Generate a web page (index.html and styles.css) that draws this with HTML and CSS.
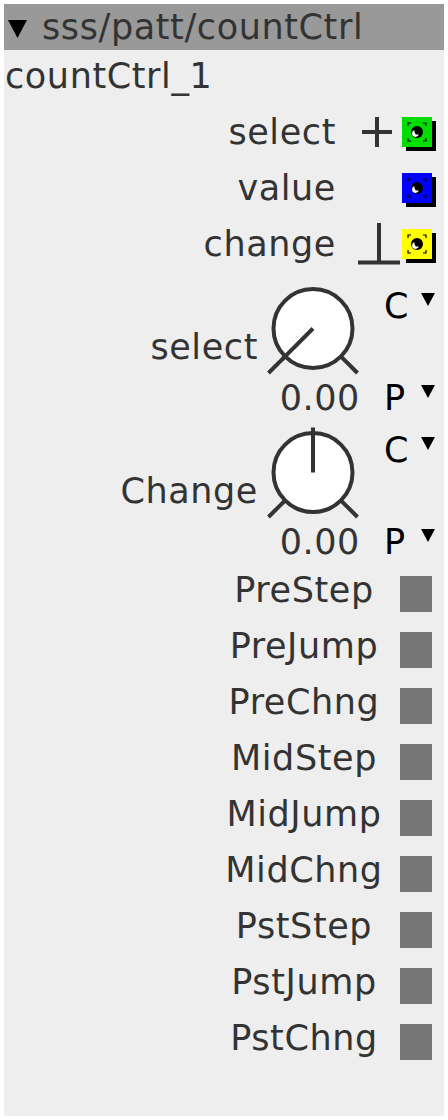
FILE: index.html
```html
<!DOCTYPE html>
<html lang="en">
<head>
<meta charset="UTF-8">
<title>countCtrl</title>
<link rel="stylesheet" href="styles.css">
</head>
<body>
<div class="panel">
    <div class="title">
        <svg class="title-arrow" width="19" height="18" viewBox="0 0 19 18"><polygon points="0,0 19,0 9.5,18" fill="#000"/></svg>
        <span>sss/patt/countCtrl</span>
    </div>
    <div class="name">countCtrl_1</div>

    <div class="ports">
        <div class="port">
            <span class="plabel">select</span>
            <svg class="pmark" width="44" height="44" viewBox="0 0 44 44">
                <line x1="4" y1="22" x2="34" y2="22" stroke="#333" stroke-width="4"/>
                <line x1="19" y1="7" x2="19" y2="37" stroke="#333" stroke-width="4"/>
            </svg>
            <div class="jack green">
                <svg width="30" height="30" viewBox="0 0 30 30">
                    <path d="M6 9V6H9M21 6H24V9M6 21V24H9M24 21V24H21" fill="none" stroke="#000" stroke-width="1.2"/>
                    <circle cx="15" cy="15" r="6" fill="#000"/>
                    <circle cx="13.4" cy="16.6" r="3.3" fill="#fff"/>
                    <circle cx="15.6" cy="14.4" r="3.1" fill="#000"/>
                </svg>
            </div>
        </div>
        <div class="port">
            <span class="plabel">value</span>
            <svg class="pmark" width="44" height="44" viewBox="0 0 44 44"></svg>
            <div class="jack blue">
                <svg width="30" height="30" viewBox="0 0 30 30">
                    <path d="M6 9V6H9M21 6H24V9M6 21V24H9M24 21V24H21" fill="none" stroke="#000" stroke-width="1.2"/>
                    <circle cx="15" cy="15" r="6" fill="#000"/>
                    <circle cx="13.4" cy="16.6" r="3.3" fill="#fff"/>
                    <circle cx="15.6" cy="14.4" r="3.1" fill="#000"/>
                </svg>
            </div>
        </div>
        <div class="port">
            <span class="plabel">change</span>
            <svg class="pmark" width="44" height="44" viewBox="0 0 44 44">
                <line x1="21" y1="1" x2="21" y2="40" stroke="#333" stroke-width="4"/>
                <line x1="0" y1="40.5" x2="42" y2="40.5" stroke="#333" stroke-width="4"/>
            </svg>
            <div class="jack yellow">
                <svg width="30" height="30" viewBox="0 0 30 30">
                    <path d="M6 9V6H9M21 6H24V9M6 21V24H9M24 21V24H21" fill="none" stroke="#000" stroke-width="1.2"/>
                    <circle cx="15" cy="15" r="6" fill="#000"/>
                    <circle cx="13.4" cy="16.6" r="3.3" fill="#fff"/>
                    <circle cx="15.6" cy="14.4" r="3.1" fill="#000"/>
                </svg>
            </div>
        </div>
    </div>

    <div class="knob">
        <div class="knob-top">
            <span class="klabel">select</span>
            <svg class="dial" width="110" height="104" viewBox="0 0 110 104">
                <circle cx="55" cy="56.5" r="39.5" fill="#fff" stroke="#333" stroke-width="4"/>
                <line x1="26.7" y1="84.8" x2="10.5" y2="101" stroke="#333" stroke-width="4"/>
                <line x1="83.3" y1="84.8" x2="99.5" y2="101" stroke="#333" stroke-width="4"/>
                <line x1="55" y1="56.5" x2="23.9" y2="87.6" stroke="#333" stroke-width="4"/>
            </svg>
            <div class="cp">
                <span>C</span>
                <svg class="drop" width="14" height="13" viewBox="0 0 14 13"><polygon points="0,0 14,0 7,13" fill="#000"/></svg>
            </div>
        </div>
        <div class="knob-bottom">
            <span class="kval">0.00</span>
            <div class="cp">
                <span>P</span>
                <svg class="drop" width="14" height="13" viewBox="0 0 14 13"><polygon points="0,0 14,0 7,13" fill="#000"/></svg>
            </div>
        </div>
    </div>

    <div class="knob">
        <div class="knob-top">
            <span class="klabel">Change</span>
            <svg class="dial" width="110" height="104" viewBox="0 0 110 104">
                <circle cx="55" cy="56.5" r="39.5" fill="#fff" stroke="#333" stroke-width="4"/>
                <line x1="26.7" y1="84.8" x2="10.5" y2="101" stroke="#333" stroke-width="4"/>
                <line x1="83.3" y1="84.8" x2="99.5" y2="101" stroke="#333" stroke-width="4"/>
                <line x1="55" y1="56.5" x2="55" y2="11.5" stroke="#333" stroke-width="4"/>
            </svg>
            <div class="cp">
                <span>C</span>
                <svg class="drop" width="14" height="13" viewBox="0 0 14 13"><polygon points="0,0 14,0 7,13" fill="#000"/></svg>
            </div>
        </div>
        <div class="knob-bottom">
            <span class="kval">0.00</span>
            <div class="cp">
                <span>P</span>
                <svg class="drop" width="14" height="13" viewBox="0 0 14 13"><polygon points="0,0 14,0 7,13" fill="#000"/></svg>
            </div>
        </div>
    </div>

    <div class="buttons">
        <div class="btn"><span class="blabel">PreStep</span><div class="bsq"></div></div>
        <div class="btn"><span class="blabel">PreJump</span><div class="bsq"></div></div>
        <div class="btn"><span class="blabel">PreChng</span><div class="bsq"></div></div>
        <div class="btn"><span class="blabel">MidStep</span><div class="bsq"></div></div>
        <div class="btn"><span class="blabel">MidJump</span><div class="bsq"></div></div>
        <div class="btn"><span class="blabel">MidChng</span><div class="bsq"></div></div>
        <div class="btn"><span class="blabel">PstStep</span><div class="bsq"></div></div>
        <div class="btn"><span class="blabel">PstJump</span><div class="bsq"></div></div>
        <div class="btn"><span class="blabel">PstChng</span><div class="bsq"></div></div>
    </div>
</div>
</body>
</html>
```

FILE: styles.css
```css
* {
    box-sizing: border-box;
}
body {
    margin: 0;
    background-color: #fff;
    font-family: "DejaVu Sans", sans-serif;
    font-size: 35px;
    letter-spacing: 0.6px;
    color: #333;
}
.panel {
    margin: 4px;
    width: 440px;
    height: 1112px;
    background-color: #eee;
}
.title {
    display: flex;
    align-items: center;
    height: 46px;
    padding-left: 4px;
    background-color: #999;
    line-height: 46px;
}
.title-arrow {
    display: block;
    margin-right: 15px;
    margin-top: 4px;
}
.name {
    height: 54px;
    padding: 6px 0 0 1px;
}
.port {
    display: flex;
    align-items: center;
    justify-content: flex-end;
    height: 56px;
    padding-right: 12px;
}
.plabel {
    margin-right: 22px;
}
.pmark {
    display: block;
}
.jack {
    width: 30px;
    height: 30px;
    box-shadow: 4px 4px 0 #000;
}
.jack svg {
    display: block;
}
.green {
    background-color: #00dd00;
}
.blue {
    background-color: #0000ff;
}
.yellow {
    background-color: #ffff00;
}
.knob {
    height: 144px;
}
.knob-top {
    display: flex;
    height: 104px;
}
.klabel {
    flex: 1;
    text-align: right;
    padding-top: 55px;
}
.dial {
    display: block;
}
.cp {
    display: flex;
    justify-content: space-between;
    align-items: flex-start;
    width: 76px;
    padding: 14px 9px 0 16px;
    color: #000;
}
.drop {
    display: block;
    margin-top: 7px;
}
.knob-bottom {
    display: flex;
    height: 40px;
}
.knob-bottom .cp {
    padding-top: 2px;
}
.kval {
    flex: 1;
    text-align: right;
    padding: 2px 8px 0 0;
}
.buttons {
    margin-top: 6px;
}
.btn {
    display: flex;
    align-items: center;
    justify-content: flex-end;
    height: 56px;
    padding-right: 12px;
}
.blabel {
    width: 160px;
    margin: 0 16px 8px 0;
    text-align: center;
}
.bsq {
    width: 32px;
    height: 36px;
    background-color: #777;
}
```
